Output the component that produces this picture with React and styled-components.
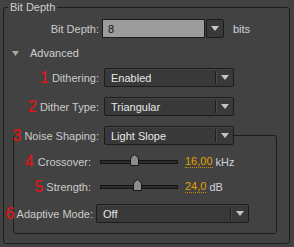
import { createGlobalStyle, styled } from 'styled-components';

const GlobalStyle = createGlobalStyle`
  html, body {
    margin: 0;
    padding: 0;
    background: #424242;
  }
  body {
    width: 294px;
    height: 247px;
    overflow: hidden;
    font-family: "Liberation Sans", Arial, sans-serif;
    font-size: 11px;
    color: #cbcbcb;
  }
`;

const Panel = styled.fieldset`
  box-sizing: border-box;
  margin: 0 0 0 3px;
  padding: 0;
  width: 287px;
  height: 244px;
  border: 1px solid #1d1d1d;
  border-radius: 3px;
  min-width: 0;
`;

const PanelLegend = styled.legend`
  margin-left: 4px;
  padding: 0 2px;
  line-height: 14px;
  color: #cfcfcf;
`;

const Row = styled.div`
  display: flex;
  align-items: center;
  height: 19px;
  margin-top: ${(p) => p.$top}px;
  margin-left: ${(p) => p.$left || 0}px;
`;

const LabelCell = styled.div`
  display: flex;
  align-items: center;
  justify-content: flex-end;
  flex: none;
  width: ${(p) => p.$w}px;
  margin-right: ${(p) => p.$gap}px;
  white-space: nowrap;
`;

const Num = styled.span`
  color: #f01010;
  font-size: 16px;
  line-height: 16px;
  margin-right: ${(p) => p.$gap ?? 3}px;
`;

const SelectBox = styled.div`
  box-sizing: border-box;
  display: flex;
  align-items: center;
  flex: none;
  width: ${(p) => p.$w}px;
  height: 19px;
  padding-left: 6px;
  border: 1px solid #1c1c1c;
  border-radius: 2px;
  background: #393939;
  box-shadow: inset 0 1px 0 #444;
  color: #e8e8e8;
`;

const SelectText = styled.span`
  flex: 1;
`;

const Divider = styled.span`
  width: 1px;
  height: 13px;
  background: #1e1e1e;
  box-shadow: 1px 0 0 #4a4a4a;
  margin-right: 5px;
`;

const ArrowIcon = ({ color = '#c4c4c4' }) => (
  <svg width="8" height="5" viewBox="0 0 8 5" style={{ display: 'block' }}>
    <polygon points="0,0 8,0 4,5" fill={color} />
  </svg>
);

const ArrowSlot = styled.span`
  display: flex;
  margin-right: 4px;
`;

const Input = styled.div`
  box-sizing: border-box;
  display: flex;
  align-items: center;
  width: 103px;
  height: 19px;
  padding-left: 5px;
  border: 1px solid #1c1c1c;
  background: #9c9c9c;
  color: #141414;
`;

const DropButton = styled.div`
  box-sizing: border-box;
  display: flex;
  align-items: center;
  justify-content: center;
  width: 18px;
  height: 19px;
  margin-left: 1px;
  border: 1px solid #1c1c1c;
  border-radius: 2px;
  background: #393939;
`;

const Unit = styled.span`
  margin-left: ${(p) => p.$gap}px;
  color: #cfd3dc;
`;

const Disclosure = styled.div`
  display: flex;
  align-items: center;
  height: 14px;
  margin-top: 8px;
  padding-left: 8px;
  gap: 11px;
  color: #cfcfcf;
`;

const Group = styled.fieldset`
  box-sizing: border-box;
  margin: 10px 0 0 9px;
  padding: 0 0 10px 0;
  width: 264px;
  border: 1px solid #1d1d1d;
  border-radius: 3px;
  min-width: 0;
`;

const GroupLegend = styled.legend`
  display: flex;
  align-items: center;
  margin-left: 1px;
  padding: 0;
  height: 19px;
`;

const SliderTrack = styled.div`
  position: relative;
  box-sizing: border-box;
  flex: none;
  width: 78px;
  height: 4px;
  border: 1px solid #141414;
  background: #2e2e2e;
  margin-right: 7px;
`;

const Thumb = styled.svg`
  position: absolute;
  top: -7px;
  display: block;
`;

const Value = styled.span`
  color: #e3a200;
  border-bottom: 1px dotted #c58d00;
  line-height: 12px;
`;

function Select({ width, children }) {
  return (
    <SelectBox $w={width}>
      <SelectText>{children}</SelectText>
      <Divider />
      <ArrowSlot>
        <ArrowIcon />
      </ArrowSlot>
    </SelectBox>
  );
}

function Slider({ pos }) {
  return (
    <SliderTrack>
      <Thumb width="9" height="12" viewBox="0 0 9 12" style={{ left: pos }}>
        <path
          d="M0.5 11.5 V5 Q0.5 4 1.5 3 L4.5 0.5 L7.5 3 Q8.5 4 8.5 5 V11.5 Z"
          fill="#8c8c8c"
          stroke="#161616"
        />
      </Thumb>
    </SliderTrack>
  );
}

export default function App() {
  return (
    <>
      <GlobalStyle />
      <Panel>
        <PanelLegend>Bit Depth</PanelLegend>
        <Row $top={5}>
          <LabelCell $w={95} $gap={3}>Bit Depth:</LabelCell>
          <Input>8</Input>
          <DropButton>
            <ArrowIcon color="#c8c8c8" />
          </DropButton>
          <Unit $gap={9}>bits</Unit>
        </Row>
        <Disclosure>
          <svg width="7" height="5" viewBox="0 0 7 5">
            <polygon points="0,0 7,0 3.5,5" fill="#a8a8a8" />
          </svg>
          Advanced
        </Disclosure>
        <Row $top={8}>
          <LabelCell $w={95} $gap={5}>
            <Num>1</Num>Dithering:
          </LabelCell>
          <Select width={130}>Enabled</Select>
        </Row>
        <Row $top={10}>
          <LabelCell $w={95} $gap={5}>
            <Num>2</Num>Dither Type:
          </LabelCell>
          <Select width={130}>Triangular</Select>
        </Row>
        <Group>
          <GroupLegend>
            <LabelCell $w={84} $gap={5}>
              <Num>3</Num>Noise Shaping:
            </LabelCell>
            <Select width={130}>Light Slope</Select>
          </GroupLegend>
          <Row $top={7}>
            <LabelCell $w={77} $gap={9}>
              <Num $gap={4}>4</Num>Crossover:
            </LabelCell>
            <Slider pos={29} />
            <Value>16,00</Value>
            <Unit $gap={3}>kHz</Unit>
          </Row>
          <Row $top={6}>
            <LabelCell $w={77} $gap={9}>
              <Num>5</Num>Strength:
            </LabelCell>
            <Slider pos={32} />
            <Value>24,0</Value>
            <Unit $gap={3}>dB</Unit>
          </Row>
          <Row $top={8}>
            <LabelCell $w={79} $gap={3}>
              <Num $gap={2}>6</Num>Adaptive Mode:
            </LabelCell>
            <Select width={153}>Off</Select>
          </Row>
        </Group>
      </Panel>
    </>
  );
}
